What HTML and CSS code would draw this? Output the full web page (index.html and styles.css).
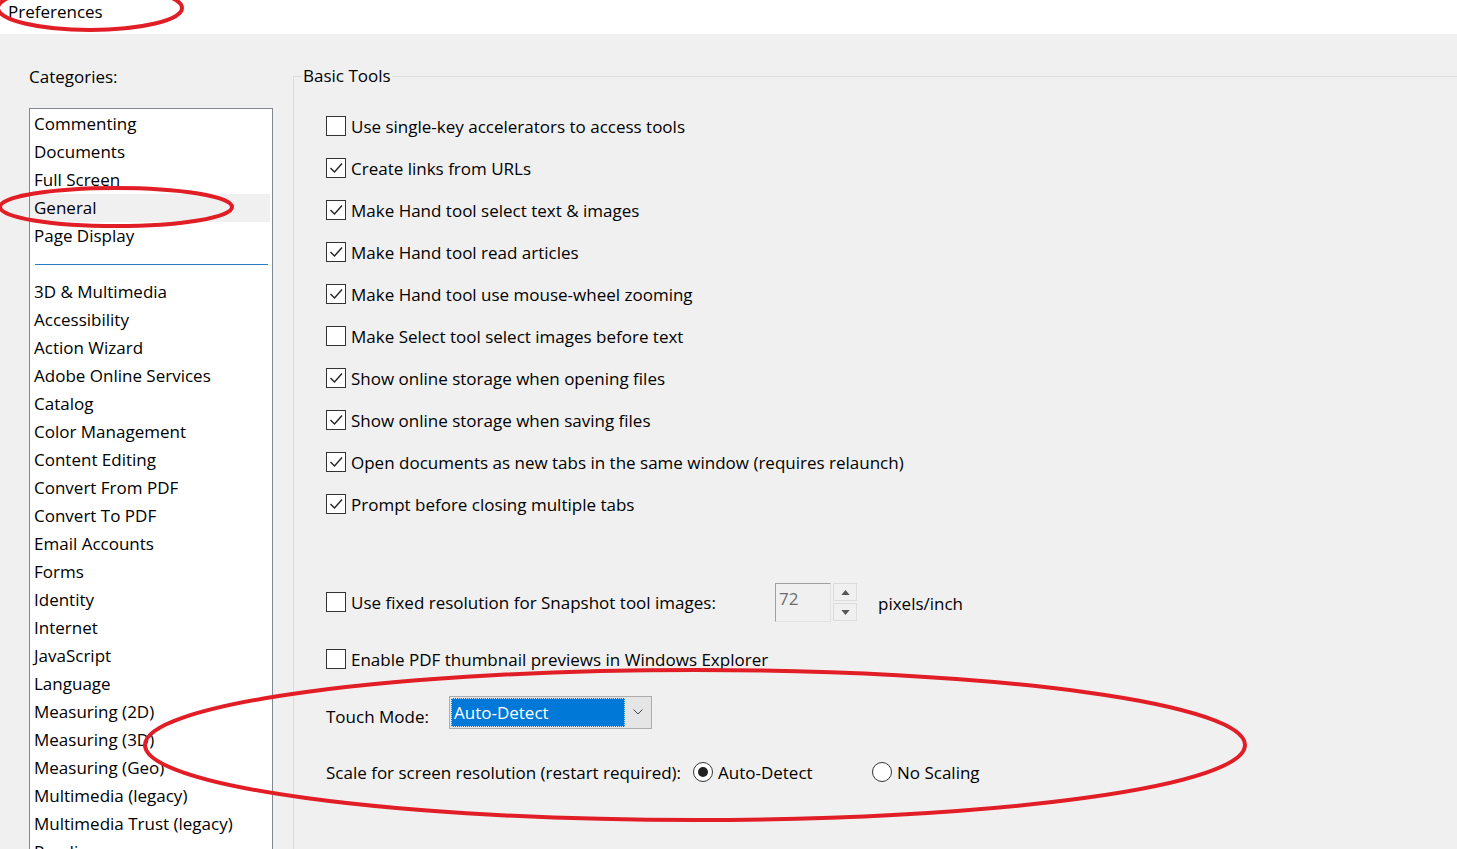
FILE: index.html
```html
<!doctype html>
<html>
  <head>
    <meta charset="UTF-8" />
    <title>Preferences</title>
    <link rel="stylesheet" href="styles.css">
  </head>
  <body>
    <div class="titlebar">Preferences</div>

    <div class="dialog">
      <div class="categories">
        <div class="categories-label">Categories:</div>
        <ul class="category-list">
          <li>Commenting</li>
          <li>Documents</li>
          <li>Full Screen</li>
          <li class="selected">General</li>
          <li>Page Display</li>
          <li class="separator"></li>
          <li>3D &amp; Multimedia</li>
          <li>Accessibility</li>
          <li>Action Wizard</li>
          <li>Adobe Online Services</li>
          <li>Catalog</li>
          <li>Color Management</li>
          <li>Content Editing</li>
          <li>Convert From PDF</li>
          <li>Convert To PDF</li>
          <li>Email Accounts</li>
          <li>Forms</li>
          <li>Identity</li>
          <li>Internet</li>
          <li>JavaScript</li>
          <li>Language</li>
          <li>Measuring (2D)</li>
          <li>Measuring (3D)</li>
          <li>Measuring (Geo)</li>
          <li>Multimedia (legacy)</li>
          <li>Multimedia Trust (legacy)</li>
          <li>Reading</li>
          <li>Reviewing</li>
        </ul>
      </div>

      <fieldset class="panel">
        <legend>Basic Tools</legend>

        <div class="options">
          <div class="check"><span class="box"></span>Use single-key accelerators to access tools</div>
          <div class="check"><span class="box checked"><svg viewBox="0 0 18 18"><polyline points="3.5,9 7.5,13 15,4.5" /></svg></span>Create links from URLs</div>
          <div class="check"><span class="box checked"><svg viewBox="0 0 18 18"><polyline points="3.5,9 7.5,13 15,4.5" /></svg></span>Make Hand tool select text &amp; images</div>
          <div class="check"><span class="box checked"><svg viewBox="0 0 18 18"><polyline points="3.5,9 7.5,13 15,4.5" /></svg></span>Make Hand tool read articles</div>
          <div class="check"><span class="box checked"><svg viewBox="0 0 18 18"><polyline points="3.5,9 7.5,13 15,4.5" /></svg></span>Make Hand tool use mouse-wheel zooming</div>
          <div class="check"><span class="box"></span>Make Select tool select images before text</div>
          <div class="check"><span class="box checked"><svg viewBox="0 0 18 18"><polyline points="3.5,9 7.5,13 15,4.5" /></svg></span>Show online storage when opening files</div>
          <div class="check"><span class="box checked"><svg viewBox="0 0 18 18"><polyline points="3.5,9 7.5,13 15,4.5" /></svg></span>Show online storage when saving files</div>
          <div class="check"><span class="box checked"><svg viewBox="0 0 18 18"><polyline points="3.5,9 7.5,13 15,4.5" /></svg></span>Open documents as new tabs in the same window (requires relaunch)</div>
          <div class="check"><span class="box checked"><svg viewBox="0 0 18 18"><polyline points="3.5,9 7.5,13 15,4.5" /></svg></span>Prompt before closing multiple tabs</div>

          <div class="snapshot-row">
            <div class="check snapshot-label"><span class="box"></span>Use fixed resolution for Snapshot tool images:</div>
            <div class="spin-input">72</div>
            <div class="spin-buttons">
              <span class="spin-btn"><svg viewBox="0 0 10 6"><polygon points="0,6 10,6 5,0" /></svg></span>
              <span class="spin-btn"><svg viewBox="0 0 10 6"><polygon points="0,0 10,0 5,6" /></svg></span>
            </div>
            <span class="unit">pixels/inch</span>
          </div>

          <div class="check pdf-row"><span class="box"></span>Enable PDF thumbnail previews in Windows Explorer</div>

          <div class="touch-row">
            <span class="touch-label">Touch Mode:</span>
            <div class="select">
              <span class="select-value">Auto-Detect</span>
              <span class="select-arrow"><svg viewBox="0 0 10 6"><polyline points="0.5,0.5 5,5 9.5,0.5" /></svg></span>
            </div>
          </div>

          <div class="scale-row">
            <span class="scale-label">Scale for screen resolution (restart required):</span>
            <span class="radio-option first"><span class="radio on"></span>Auto-Detect</span>
            <span class="radio-option"><span class="radio"></span>No Scaling</span>
          </div>
        </div>
      </fieldset>
    </div>

    <svg class="annotations" viewBox="0 0 1457 849">
      <ellipse cx="90" cy="8" rx="92" ry="22" />
      <ellipse cx="116" cy="207" rx="116" ry="19" />
      <ellipse cx="695" cy="745" rx="550" ry="75" />
    </svg>
  </body>
</html>
```

FILE: styles.css
```css
:root {
  --bg: #f0f0f0;
  --text: #000;
  --list-border: #828790;
  --group-border: #dcdcdc;
  --accent: #0078d7;
  --mark: #e11d26;
}

* {
  margin: 0;
  padding: 0;
  box-sizing: border-box;
}

body {
  font-family: 'Open Sans', 'Noto Sans', sans-serif;
  font-size: 17px;
  color: var(--text);
  background-color: var(--bg);
  height: 849px;
  overflow: hidden;
  position: relative;
}

.titlebar {
  height: 34px;
  background-color: #fff;
  padding-left: 8px;
  line-height: 24px;
}

.dialog {
  display: flex;
  height: 815px;
}

/* left column */

.categories {
  width: 293px;
  flex-shrink: 0;
  padding: 29px 0 0 29px;
  display: flex;
  flex-direction: column;
}

.categories-label {
  line-height: 28px;
  margin-bottom: 17px;
}

.category-list {
  list-style: none;
  width: 244px;
  flex: 1;
  background-color: #fff;
  border: 1px solid var(--list-border);
  border-bottom: none;
  padding-top: 1px;
  overflow: hidden;
}

.category-list li {
  line-height: 28px;
  height: 28px;
  padding-left: 4px;
  white-space: nowrap;
}

.category-list li.selected {
  background-color: var(--bg);
  margin-right: 2px;
}

.category-list li.separator {
  padding: 14px 4px 0 5px;
}

.category-list li.separator::before {
  content: '';
  display: block;
  height: 1px;
  background-color: #2b7bc0;
}

/* right panel */

.panel {
  flex: 1;
  margin-top: 28px;
  border: 1px solid var(--group-border);
  border-right: none;
  border-bottom: none;
  padding: 0 0 0 8px;
  min-width: 0;
}

.panel legend {
  padding: 0 1px;
  line-height: 28px;
}

.options {
  padding: 15px 0 0 24px;
}

.check {
  display: flex;
  align-items: center;
  height: 42px;
  white-space: nowrap;
}

.box {
  width: 20px;
  height: 20px;
  border: 1px solid #333;
  background-color: #fff;
  margin-right: 5px;
  flex-shrink: 0;
  display: flex;
}

.box svg {
  width: 18px;
  height: 18px;
}

.box polyline {
  fill: none;
  stroke: #222;
  stroke-width: 1.4;
}

.snapshot-row {
  display: flex;
  align-items: center;
  height: 42px;
  margin-top: 56px;
}

.snapshot-label {
  width: 449px;
}

.spin-input {
  width: 56px;
  height: 39px;
  border: 1px solid #a0a0a0;
  border-right-color: #e3e3e3;
  border-bottom-color: #e3e3e3;
  color: #6d6d6d;
  padding: 3px 0 0 3px;
  line-height: 24px;
}

.spin-buttons {
  display: flex;
  flex-direction: column;
  gap: 2px;
  margin-left: 2px;
}

.spin-btn {
  width: 24px;
  height: 18px;
  border: 1px solid var(--group-border);
  display: flex;
  align-items: center;
  justify-content: center;
}

.spin-btn svg {
  width: 9px;
  height: 5px;
}

.spin-btn polygon {
  fill: #555;
}

.unit {
  margin-left: 21px;
  padding-top: 2px;
}

.pdf-row {
  margin-top: 15px;
}

.touch-row {
  display: flex;
  align-items: center;
  height: 42px;
  margin-top: 11px;
}

.touch-label {
  width: 123px;
  padding-top: 8px;
}

.select {
  width: 203px;
  height: 33px;
  border: 1px solid #adadad;
  background-color: #e5e5e5;
  padding: 1px;
  display: flex;
}

.select-value {
  width: 174px;
  background-color: var(--accent);
  color: #fff;
  padding-left: 3px;
  line-height: 29px;
  outline: 1px dotted #cfe3f7;
  outline-offset: -1px;
}

.select-arrow {
  flex: 1;
  display: flex;
  align-items: center;
  justify-content: center;
}

.select-arrow svg {
  width: 10px;
  height: 6px;
}

.select-arrow polyline {
  fill: none;
  stroke: #444;
  stroke-width: 1;
}

.scale-row {
  display: flex;
  align-items: center;
  height: 42px;
  margin-top: 18px;
  white-space: nowrap;
}

.scale-label {
  width: 367px;
}

.radio-option {
  display: flex;
  align-items: center;
}

.radio-option.first {
  width: 179px;
}

.radio {
  width: 20px;
  height: 20px;
  border: 1px solid #333;
  border-radius: 50%;
  background-color: #fff;
  margin-right: 5px;
  display: flex;
  align-items: center;
  justify-content: center;
}

.radio.on::after {
  content: '';
  width: 10px;
  height: 10px;
  border-radius: 50%;
  background-color: #222;
}

/* red hand-drawn marks over the screenshot */

.annotations {
  position: absolute;
  left: 0;
  top: 0;
  width: 1457px;
  height: 849px;
  pointer-events: none;
}

.annotations ellipse {
  fill: none;
  stroke: var(--mark);
  stroke-width: 4;
}
```
